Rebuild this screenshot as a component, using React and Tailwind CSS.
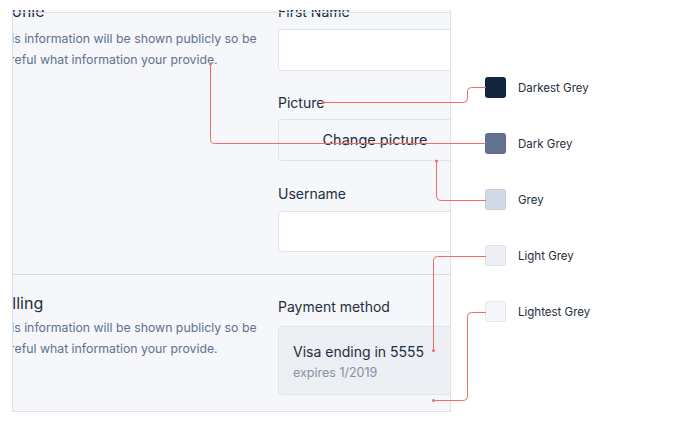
import React from "react";

const swatches = [
  { name: "Darkest Grey", color: "bg-[#12263f]" },
  { name: "Dark Grey", color: "bg-[#617391]" },
  { name: "Grey", color: "bg-[#d0dbe7]" },
  { name: "Light Grey", color: "bg-[#eceff3]" },
  { name: "Lightest Grey", color: "bg-[#f5f6f9]" },
];

const Description = () => (
  <p className="mt-[2px] text-[12.3px] leading-[21px] text-[#62718b]">
    This information will be shown publicly so be careful what information your provide.
  </p>
);

const Annotations = () => (
  <svg className="pointer-events-none absolute inset-0" width="687" height="421" fill="none">
    <g stroke="#f26b6b" strokeWidth="1">
      <path d="M323 102.5 H463.5 Q467.5 102.5 467.5 98.5 V91 Q467.5 87.5 471.5 87.5 H486" />
      <path d="M210.5 64 V139 Q210.5 143.5 214.5 143.5 H486" />
      <path d="M436.5 161 V196.5 Q436.5 200.5 440.5 200.5 H486" />
      <path d="M433.5 350 V260 Q433.5 256.5 437.5 256.5 H486" />
      <path d="M433.5 400.5 H463.5 Q467.5 400.5 467.5 396.5 V316 Q467.5 312.5 471.5 312.5 H486" />
    </g>
    <g fill="#f26b6b">
      <circle cx="323" cy="102.5" r="1.5" />
      <circle cx="210.5" cy="64" r="1.5" />
      <circle cx="436.5" cy="161" r="1.5" />
      <circle cx="433.5" cy="350.5" r="1.5" />
      <circle cx="433.5" cy="400.5" r="1.5" />
    </g>
  </svg>
);

export default function App() {
  return (
    <div className="relative flex h-[421px] w-[687px] bg-white font-['Inter',sans-serif]">
      {/* Panel screenshot */}
      <div className="relative ml-[12px] mt-[10px] h-[402px] w-[439px] overflow-hidden border-x border-b border-[#dde2e9] bg-[#f5f7fa]">
        <div className="absolute left-0 right-0 top-[2px] h-px bg-[#dde2e9]" />

        {/* Profile */}
        <div className="-ml-[17px] mt-[-8px] flex pb-[22px]">
          <div className="w-[268px] shrink-0">
            <h2 className="mt-[-3px] mb-[5px] text-[16px] leading-[24px] text-[#1f2d3d]">Profile</h2>
            <Description />
          </div>
          <div className="ml-[14px] w-[194px] shrink-0">
            <label className="block text-[14px] leading-[20px] text-[#1f2d3d]">First Name</label>
            <div className="mt-[7px] h-[42px] rounded-[4px] border border-[#dfe4eb] bg-white" />
            <label className="mt-[22px] block text-[14px] leading-[20px] text-[#1f2d3d]">Picture</label>
            <div className="mt-[6px] flex h-[42px] items-center justify-center rounded-[4px] border border-[#dfe4eb] bg-[#f5f7fa] text-[14.5px] text-[#1f2d3d]">
              Change picture
            </div>
            <label className="mt-[23px] block text-[14px] leading-[20px] text-[#1f2d3d]">Username</label>
            <div className="mt-[7px] h-[41px] rounded-[4px] border border-[#dfe4eb] bg-white" />
          </div>
        </div>

        <div className="h-px bg-[#d3dbe5]" />

        {/* Billing */}
        <div className="-ml-[17px] flex pt-[16px]">
          <div className="w-[268px] shrink-0">
            <h2 className="pl-[2px] text-[16px] leading-[24px] text-[#1f2d3d]">Billing</h2>
            <Description />
          </div>
          <div className="ml-[14px] mt-[6px] w-[194px] shrink-0">
            <label className="block text-[14px] leading-[20px] text-[#1f2d3d]">Payment method</label>
            <div className="mt-[9px] h-[69px] rounded-[4px] border border-[#dfe4eb] bg-[#eceff4] px-[14px] pt-[15px]">
              <div className="text-[14px] leading-[20px] text-[#1f2d3d]">Visa ending in 5555</div>
              <div className="mt-[3px] text-[12.5px] leading-[16px] text-[#8592a6]">expires 1/2019</div>
            </div>
          </div>
        </div>
      </div>

      {/* Colour legend */}
      <div className="ml-[34px] mt-[77px] flex flex-col gap-[35px]">
        {swatches.map((s) => (
          <div key={s.name} className="flex h-[21px] items-center gap-[12px]">
            <span className={`h-[21px] w-[21px] rounded-[3px] border border-black/5 ${s.color}`} />
            <span className="pt-[2px] text-[11.5px] text-[#1f2d3d]">{s.name}</span>
          </div>
        ))}
      </div>

      <Annotations />
    </div>
  );
}
